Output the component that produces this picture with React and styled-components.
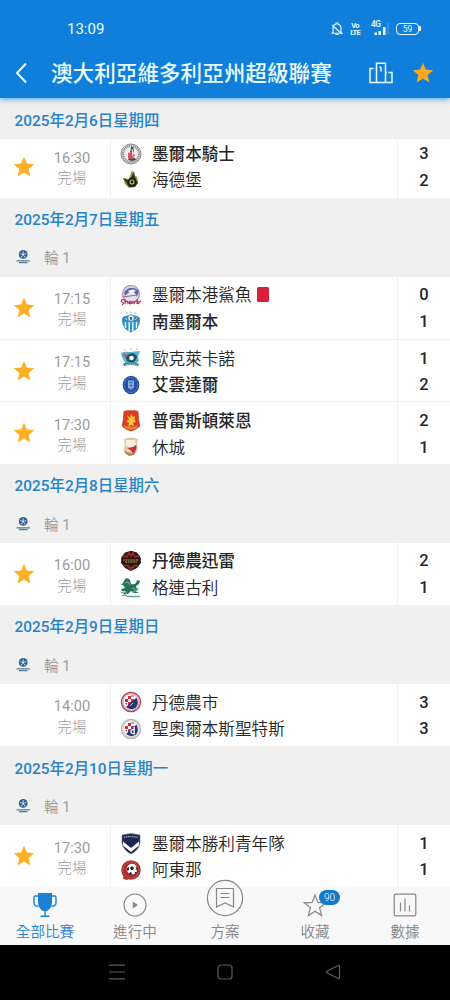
import styled, { createGlobalStyle } from "styled-components";

const STAR = "M12 .8 15.1 8.3 23.3 8.9 17 14.2 19 22.3 12 17.9 5 22.3 7 14.2.7 8.9 8.9 8.3Z";

const Knights = () => (
	<svg viewBox="0 0 22 22">
		<circle cx="11" cy="11" r="10" fill="#e4e4e4" stroke="#8a9090" />
		<circle cx="11" cy="11" r="8.1" fill="none" stroke="#858b8b" strokeWidth="2.2" strokeDasharray="1.2 .8" />
		<circle cx="11" cy="11" r="6.3" fill="#f2eeee" />
		<path d="M11 4h2l1 3-1 3h-3ZM9 15h6l1 2-4 1-4-1Z" fill="#4a4d50" />
		<path d="M8 10l4-1 3 3-2 4-5-1Z" fill="#d8535f" />
		<path d="M12 6l1 7" stroke="#fff" strokeWidth="1" />
	</svg>
);

const Heidelberg = () => (
	<svg viewBox="0 0 22 22">
		<path d="M12 1l2 5 3 2 1 5-3 5-6 1-4-4-2-6 6 1Z" fill="#8b9338" />
		<path d="M3 9l7 3 4-10 1 7 3 5-3 4-6 0-3-5Z" fill="#35391d" />
		<circle cx="12" cy="13" r="4.4" fill="#181b16" />
		<circle cx="12" cy="13" r="2" fill="none" stroke="#c4c96d" strokeWidth="1.1" />
	</svg>
);

const Sharks = () => (
	<svg viewBox="0 0 22 22">
		<circle cx="11" cy="10" r="8.5" fill="#dce1f2" stroke="#bd98b8" strokeWidth="1.4" />
		<path d="M4 8Q11 0 19 7L17 13Q15 6 8 9L5 12Z" fill="#5768a8" />
		<path d="M8 7q5-3 8 0l-3 1 2 3-5-2Z" fill="#fff" />
		<path d="M3 13 17 11" stroke="#c65070" />
		<path d="M4 16Q0 15 2 18q3 1 0 3M5 15v5m0-2q3-2 3 2m3-3q-3 1-1 3l2-2v2m2-3v3q0-3 2-2m1-3v5m0-2 2-1m-2 1 2 2m2-3q-2 0-1 2" fill="none" stroke="#b2294c" strokeWidth="1.15" />
	</svg>
);

const SouthMelbourne = () => (
	<svg viewBox="0 0 22 22">
		<path d="M2 9h18q0 9-9 12.5Q2 18 2 9Z" fill="#2894cf" />
		<path d="M5.5 11v6m3.7-6v9.5m3.6-9.5v9.5m3.7-9.5v6" stroke="#fff" strokeWidth="1.4" />
		<path d="M2 9q0-4 4-4 5-3 10 0 4 0 4 4l-2 2H4Z" fill="#3a88b4" />
		<circle cx="11" cy="7" r="3.2" fill="#edf5fa" stroke="#5390ad" strokeWidth=".7" />
		<path d="m11 5.7-1.4 1 .6 2h1.7l.6-2Z" fill="#315d76" />
		<path d="m5 7 2 2m8 0 2-2" stroke="#d9f1ff" strokeWidth=".7" />
		<circle cx="7" cy="2" r=".7" fill="#7fb3cf" /><circle cx="11" cy="1.2" r=".7" fill="#7fb3cf" /><circle cx="15" cy="2" r=".7" fill="#7fb3cf" />
	</svg>
);

const Oakleigh = () => (
	<svg viewBox="0 0 22 22">
		<path d="M1 6q4-2 9-1l10-1-2 6 1 4-4 3-8 1-3-4-2-4Z" fill="#58b4ca" />
		<path d="m5 8 8-2 4 3-1 4-4 3-5-2-1-3Z" fill="#22516b" />
		<circle cx="11.5" cy="11" r="2.3" fill="#e8ffff" />
		<path d="M3 7h6l-2 2.4H4Z" fill="#a86478" />
		<path d="M3.5 18q7-3 15 0" fill="none" stroke="#38839b" strokeWidth="2.8" />
		<path d="M5 18.2q6-2.4 12 0" fill="none" stroke="#fff" strokeWidth=".7" strokeDasharray="1.5 .7" />
		<path d="m4 2 1 1.5M11 .5V3m6-1.5L16 3" stroke="#8dbdcb" />
	</svg>
);

const Avondale = () => (
	<svg viewBox="0 0 22 22">
		<ellipse cx="11" cy="11" rx="8.3" ry="9.3" fill="#2450a2" />
		<ellipse cx="11" cy="11" rx="6.5" ry="7.4" fill="none" stroke="#5c87cc" strokeDasharray="1.5 1" />
		<path d="M8 6.5h6v7l-3 2.5-3-2.5Z" fill="#8eafe0" />
		<path d="M9 8.5h4m-4 3h4m-2-4v7" stroke="#3763ac" strokeWidth=".8" />
	</svg>
);

const Preston = () => (
	<svg viewBox="0 0 22 22">
		<path d="M4 1.5 7 .8h8l3 .7q0 7 1.8 14.5-2.3 3-8.8 5-6.5-2-8.8-5Q4 8.500 4 1.500Z" fill="#dd3c26" stroke="#b24120" strokeWidth=".8" />
		<path d="M4 15q7 4 14 0l-1 3-6 2-6-2Z" fill="#ed8424" />
		<path d="m7 5 3 3 1-4 2 3 2-1-.5 4 1.500 2-3 .5 1 3.500-3-1-3 2 1-4-3-2 3-1Z" fill="#ffc53d" />
	</svg>
);

const Hume = () => (
	<svg viewBox="0 0 22 22">
		<path d="M4 3q7-3 14 0l-1 5q2 7-2 9l-4 3-5-2-2-4 1-6Z" fill="#e2c6a3" />
		<path d="M6 4h9l1 6-5 2-5-2Z" fill="#f8eedb" />
		<path d="m8 12 5-1 3-2 .5 3-1.500 4-3 2Z" fill="#c5303a" />
		<path d="M4 14q5 5 12 2l-2 3-5 1-4-3Z" fill="#bb8450" />
		<path d="m7 15 3-1 2 3" stroke="#fff1dd" fill="none" />
	</svg>
);

const Thunder = () => (
	<svg viewBox="0 0 22 22">
		<path d="m11 .8 6 1.700 3.500 4.500.5 6-4 5-6 3-6-3-4-5 .5-6L5 2.500Z" fill="#331a18" />
		<path d="m3 6 4 1 2-4 2 3 2-3 2 4 4-1M4 16l3-1 4 5 4-5 3 1" fill="none" stroke="#a5272b" strokeWidth="1.4" />
		<path d="M1 8.500h20L18 14q-7 1-14 0Z" fill="#211716" />
		<path d="M3 10h16M5 12h12" stroke="#b5a34d" strokeWidth="1.2" strokeDasharray="2 .6" />
		<path d="m8 15.500 3 2.500 3-2.500" fill="none" stroke="#a42d2a" />
	</svg>
);

const GreenGully = () => (
	<svg viewBox="0 0 22 22">
		<path d="M5 2q3-2 5 1l1 4q3 1 5-1l1-3 3 1-1 3-3 2 1 3-2 2 4 2-5 0-3-2-3 3-5 0 3-3-4 0-1-2 4-1-2-3-2 0 2-2Z" fill="#27725d" />
		<path d="m12 14 7-3-1 2-5 3Z" fill="#5a9987" />
		<path d="M1 16q4-2 6 1m-5 2q3-2 5 0M7 19.500h13" fill="none" stroke="#6aa592" strokeWidth="1.300" />
		<path d="m5 6 3-1 2 3m2 3 3 1" stroke="#bce0d2" strokeWidth=".6" fill="none" />
	</svg>
);

// checkered badge shared by the two Croatian clubs
const Checkered = ({ ring, letter }) => (
	<svg viewBox="0 0 22 22">
		<circle cx="11" cy="11" r="9.6" fill="#f5eeee" stroke={ring} strokeWidth="1.3" />
		<circle cx="11" cy="11" r="8.2" fill="none" stroke={ring} strokeWidth="1" strokeDasharray="1 .8" />
		<circle cx="11" cy="11" r="6.9" fill="#fff" />
		<path d="M5 8h3v3H5Zm3-3h3v3H8Zm3 3h3v3h-3Zm-3 3h3v3H8ZM11 4.4h3v1h-3Zm-6 7.6h2v2Z" fill="#d32d3c" />
		<path d="M16.5 6.5 6 16q5 4 10 .5 3.5-4 .5-10Z" fill="#263a70" />
		<path d={letter ? "M14.2 9v7.5M14 12q-3-1-3 1.5t3 2" : "m10 15 3-3"} fill="none" stroke="#e9eef5" strokeWidth={letter ? 1.4 : 0.8} />
	</svg>
);

const Victory = () => (
	<svg viewBox="0 0 22 22">
		<path d="M2 2q9-3 18 0v8q-1 7-9 11-8-4-9-11Z" fill="#1c2750" stroke="#7a839e" strokeWidth=".7" />
		<path d="M3 8.500 11 15l8-6.500v4L11 19 3 12.500Z" fill="#fff" />
		<path d="M4 4.5q7-2 14 0" fill="none" stroke="#a8b1c9" strokeWidth="1.2" strokeDasharray="1.3 .6" />
	</svg>
);

const Altona = () => (
	<svg viewBox="0 0 22 22">
		<circle cx="11" cy="11" r="9.8" fill="#a92d31" />
		<circle cx="11" cy="11" r="8" fill="none" stroke="#df8a83" strokeWidth="1" strokeDasharray="1 1.1" />
		<circle cx="12" cy="10" r="5.3" fill="#fff" />
		<path d="m12 7 2 2-1 2h-2l-1-2Zm-5 2 2-1 0 3-2 1Zm9 0 1-2 1 4-1 1Zm-6 4 2 1-1 2-2-1Zm5 0 2 0-2 2Z" fill="#29242a" />
		<path d="M4 12q2 6 8 6l-5 3-4-1Z" fill="#b53738" />
	</svg>
);

const LeagueLogo = () => (
	<svg width="15" height="15" viewBox="0 0 15 15">
		<circle cx="7.2" cy="5.4" r="4.4" fill="#345f91" />
		<path d="M7.200 2.300v1.500M4.300 4.500l1.300.6M10.100 4.500l-1.300.6M5.300 8.200l.8-1.200M9.100 8.200l-.8-1.200" stroke="#cddbea" strokeWidth="1.1" />
		<circle cx="7.2" cy="5.5" r="1.2" fill="#e4ebf3" />
		<path d="M.5 11.800h13.500M3 13.600h8.500" fill="none" stroke="#5a7b9c" strokeWidth="1.2" />
	</svg>
);

const sections = [
	{
		date: "2025年2月6日星期四",
		matches: [
			{ time: "16:30", fav: true, home: ["墨爾本騎士", 3, <Knights />], away: ["海德堡", 2, <Heidelberg />], win: "home" },
		],
	},
	{
		date: "2025年2月7日星期五",
		round: "輪 1",
		matches: [
			{ time: "17:15", fav: true, home: ["墨爾本港鯊魚", 0, <Sharks />], away: ["南墨爾本", 1, <SouthMelbourne />], win: "away", red: true },
			{ time: "17:15", fav: true, home: ["歐克萊卡諾", 1, <Oakleigh />], away: ["艾雲達爾", 2, <Avondale />], win: "away" },
			{ time: "17:30", fav: true, home: ["普雷斯頓萊恩", 2, <Preston />], away: ["休城", 1, <Hume />], win: "home" },
		],
	},
	{
		date: "2025年2月8日星期六",
		round: "輪 1",
		matches: [
			{ time: "16:00", fav: true, home: ["丹德農迅雷", 2, <Thunder />], away: ["格連古利", 1, <GreenGully />], win: "home" },
		],
	},
	{
		date: "2025年2月9日星期日",
		round: "輪 1",
		matches: [
			{ time: "14:00", home: ["丹德農市", 3, <Checkered ring="#a8475b" />], away: ["聖奧爾本斯聖特斯", 3, <Checkered ring="#b3b6b9" letter />] },
		],
	},
	{
		date: "2025年2月10日星期一",
		round: "輪 1",
		matches: [
			{ time: "17:30", fav: true, home: ["墨爾本勝利青年隊", 1, <Victory />], away: ["阿東那", 1, <Altona />] },
		],
	},
];

const StatusBar = () => (
	<Status>
		<Clock>13:09</Clock>
		<StatusIcons>
			<svg width="12" height="14" viewBox="0 0 12 14" fill="none" stroke="currentColor" strokeWidth="1.1">
				<path d="M2 10.2V6q0-3 3-3.700V1h2v1.300q3 .7 3 3.700v4.200l1 1H1ZM4.500 12.500h3M1 3l10 9" />
			</svg>
			<Volte><span>Vo</span><span>LTE</span></Volte>
			<Signal>
				<span>4G</span>
				<svg width="17" height="14" viewBox="0 0 17 14" fill="currentColor">
					<path d="M2.500 10.500h2.500v2.500h-2.500Zm4-1.500h2.500v4h-2.500Zm4.500-4h2.500v8h-2.500Z" />
					<path d="M15.5 1h1v12h-1Z" opacity=".3" />
				</svg>
			</Signal>
			<Battery>59</Battery>
		</StatusIcons>
	</Status>
);

const Team = ({ team, bold, red }) => (
	<TeamRow>
		<Crest>{team[2]}</Crest>
		<TeamName $bold={bold}>{team[0]}</TeamName>
		{red && <RedCard />}
	</TeamRow>
);

const Match = ({ match }) => (
	<MatchRow>
		<Favourite>
			{match.fav && <svg width="22" height="22" viewBox="0 0 24 24"><path d={STAR} fill="#fdb022" /></svg>}
		</Favourite>
		<Kickoff>
			<Time>{match.time}</Time>
			<State>完場</State>
		</Kickoff>
		<Teams>
			<Team team={match.home} bold={match.win === "home"} red={match.red} />
			<Team team={match.away} bold={match.win === "away"} />
		</Teams>
		<Scores>
			<Score>{match.home[1]}</Score>
			<Score>{match.away[1]}</Score>
		</Scores>
	</MatchRow>
);

const App = () => {
	return (
		<Screen>
			<GlobalStyle />
			<Header>
				<StatusBar />
				<TitleBar>
					<BackIcon width="14" height="22" viewBox="0 0 14 22" fill="none" stroke="currentColor" strokeWidth="2">
						<path d="M12 1.5 3 11l9 9.5" />
					</BackIcon>
					<Title>澳大利亞維多利亞州超級聯賽</Title>
					<PodiumIcon width="24" height="22" viewBox="0 0 24 22" fill="none" stroke="currentColor" strokeWidth="1.5">
						<path d="M4.500 6.500H1V20.5H23V10.500H19.500M7.500 20V1.200H16.500V20M7.500 6.500H6.500M16.500 10.500H18M12 5V9.500M10.500 5.200h1.500" />
					</PodiumIcon>
					<svg width="22" height="22" viewBox="0 0 24 24"><path d={STAR} fill="#fda91c" /></svg>
				</TitleBar>
			</Header>
			<Feed>
				{sections.map((section) => (
					<Section key={section.date}>
						<DateHead $sticky={!section.round}>{section.date}</DateHead>
						{section.round && <Round><LeagueLogo />{section.round}</Round>}
						{section.matches.map((match) => <Match key={match.home[0]} match={match} />)}
					</Section>
				))}
			</Feed>
			<TabBar>
				<Tab $active>
					<TabIcon>
						<svg width="24" height="26" viewBox="0 0 24 26">
							<path d="M5 1h14v10q-1 6-5 8h-4Q6 17 5 11Z" fill="currentColor" />
							<path d="M5 4H2.500Q1 4 1 6v5q0 3 4.500 3.500M19 4h2.500q1.500 0 1.500 2v5q0 3-4.500 3.500M12 17v7M7.5 24.200h9" fill="none" stroke="currentColor" strokeWidth="1.4" />
						</svg>
					</TabIcon>
					全部比賽
				</Tab>
				<Tab>
					<TabIcon>
						<svg width="24" height="24" viewBox="0 0 24 24">
							<circle cx="12" cy="12" r="11" fill="none" stroke="currentColor" strokeWidth="1.1" />
							<path d="M9.800 8.500 15 12l-5.200 3.500Z" fill="currentColor" />
						</svg>
					</TabIcon>
					進行中
				</Tab>
				<Tab>
					<TabIcon $raised>
						<svg width="38" height="38" viewBox="0 0 38 38" fill="#f8f8f8" stroke="currentColor" strokeWidth="1.2">
							<circle cx="19" cy="19" r="17.6" />
							<path d="M10.500 9.500h17v18.500l-8.500-4-8.500 4ZM14.500 14.5h9M14.500 18.5h9" />
						</svg>
					</TabIcon>
					方案
				</Tab>
				<Tab>
					<TabIcon>
						<svg width="24" height="26" viewBox="0 0 24 26" fill="none" stroke="currentColor" strokeWidth="1.2">
							<path d="m12 3 2.8 7.4 8 .4-6.2 5 2 7.8-6.6-4.3-6.6 4.3 2-7.8-6.2-5 8-.4Z" />
						</svg>
						<Badge>90</Badge>
					</TabIcon>
					收藏
				</Tab>
				<Tab>
					<TabIcon>
						<svg width="24" height="24" viewBox="0 0 24 24" fill="none" stroke="currentColor" strokeWidth="1.2">
							<rect x="1.2" y="1.2" width="21.6" height="21.6" rx="1.5" />
							<path d="M7.500 9.500v9M12 5.500v13M16.500 12.500v6" />
						</svg>
					</TabIcon>
					數據
				</Tab>
			</TabBar>
			<SystemBar>
				<svg width="16" height="16" viewBox="0 0 16 16"><path d="M0 1.2h16M0 8h16M0 14.8h16" /></svg>
				<svg width="16" height="16" viewBox="0 0 16 16"><rect x="1" y="1" width="14" height="14" rx="3" /></svg>
				<svg width="16" height="16" viewBox="0 0 16 16"><path d="M13 1.5 2 7.2q-1 .8 0 1.6l11 5.7q1.5.6 1.5-1V2.5q0-1.6-1.5-1Z" /></svg>
			</SystemBar>
		</Screen>
	);
};

export default App;

const GlobalStyle = createGlobalStyle`
	* {
		box-sizing: border-box;
	}

	body {
		margin: 0;
		font-family: Roboto, "Noto Sans CJK TC", sans-serif;
	}

	svg {
		display: block;
		flex-shrink: 0;
	}
`;

const Screen = styled.div`
	display: flex;
	flex-direction: column;
	width: 450px;
	height: 1000px;
	overflow: hidden;
	background-color: #f0f0f0;
`;

const Header = styled.header`
	position: relative;
	z-index: 2;
	height: 98px;
	flex-shrink: 0;
	background-color: #107fdb;
	color: #e9fbff;
	box-shadow: 0 1px 6px rgba(16, 127, 219, 0.75);
`;

const Status = styled.div`
	display: flex;
	justify-content: space-between;
	align-items: center;
	height: 48px;
	padding: 10px 28px 0 67px;
`;

const Clock = styled.span`
	font-size: 15px;
	line-height: 20px;
`;

const StatusIcons = styled.div`
	display: flex;
	align-items: center;
`;

const Volte = styled.div`
	display: flex;
	flex-direction: column;
	align-items: center;
	width: 10px;
	margin-left: 7px;
	font-size: 7.5px;
	font-weight: 700;
	line-height: 7px;
	letter-spacing: -0.8px;
`;

const Signal = styled.div`
	position: relative;
	margin: 0 7px 0 12px;

	span {
		position: absolute;
		top: -2px;
		left: -1px;
		font-size: 8.5px;
		font-weight: 500;
		line-height: 9px;
		letter-spacing: -0.5px;
	}
`;

const Battery = styled.div`
	position: relative;
	width: 23px;
	height: 12px;
	margin-right: 3px;
	border: 1.5px solid currentColor;
	border-radius: 4px;
	font-size: 8.5px;
	line-height: 10px;
	text-align: center;

	&::after {
		content: "";
		position: absolute;
		top: 2px;
		right: -3px;
		width: 2px;
		height: 5px;
		background-color: currentColor;
		border-radius: 0 1px 1px 0;
	}
`;

const TitleBar = styled.div`
	display: flex;
	align-items: center;
	height: 50px;
	padding: 0 16px 0 14px;
`;

const BackIcon = styled.svg`
	margin-right: 23px;
`;

const PodiumIcon = styled.svg`
	margin-right: 19px;
`;

const Title = styled.h1`
	flex: 1;
	margin: 0;
	padding-top: 2px;
	font-size: 21.6px;
	font-weight: 500;
	line-height: 30px;
	white-space: nowrap;
`;

const Feed = styled.main`
	flex: 1;
	min-height: 0;
	overflow: hidden;
`;

const Section = styled.section`
	display: flex;
	flex-direction: column;
`;

// the first date is pinned and hides the top edge of the match scrolled under it
const DateHead = styled.div`
	position: relative;
	z-index: 1;
	display: flex;
	align-items: center;
	height: ${({ $sticky }) => ($sticky ? "41.4px" : "39.5px")};
	margin-bottom: ${({ $sticky }) => ($sticky ? "-4px" : "0")};
	padding: ${({ $sticky }) => ($sticky ? "1px" : "2px")} 14.5px 0;
	border-bottom: 1px solid #ececec;
	background-color: #f0f0f0;
	color: #2583cb;
	font-size: 15.4px;
	font-weight: 500;
`;

const Round = styled.div`
	display: flex;
	align-items: center;
	gap: 13.5px;
	height: 39.4px;
	padding: 0 15px 0 15.5px;
	color: #a0a0a0;
	font-size: 14.6px;
	font-weight: 400;
`;

const MatchRow = styled.article`
	display: flex;
	height: 62.4px;
	background-color: #fff;

	& + & {
		border-top: 1px solid #f1f1f1;
	}
`;

const Favourite = styled.div`
	display: flex;
	align-items: center;
	justify-content: center;
	width: 48px;
`;

const Kickoff = styled.div`
	display: flex;
	flex-direction: column;
	align-items: center;
	width: 63px;
	padding: 12.4px 14px 0 0;
	border-right: 1px solid #f1f1f1;
	color: #9b9b9b;
	line-height: 20px;
`;

const Time = styled.span`
	font-size: 14.6px;
`;

const State = styled.span`
	padding-top: 1.4px;
	font-size: 14.4px;
	font-weight: 300;
`;

const Teams = styled.div`
	flex: 1;
	padding-top: 5px;
	padding-left: 9px;
`;

const TeamRow = styled.div`
	display: flex;
	align-items: center;
	height: 26.6px;
`;

const Crest = styled.div`
	width: 22px;
	height: 22px;
	margin-right: 10px;
`;

const TeamName = styled.span`
	padding-top: 2.4px;
	color: #262626;
	font-size: 16.6px;
	font-weight: ${({ $bold }) => ($bold ? 500 : 350)};
	line-height: 24px;
`;

const RedCard = styled.i`
	width: 12px;
	height: 15px;
	margin-left: 5px;
	border-radius: 1.5px;
	background-color: #dc1f38;
`;

const Scores = styled.div`
	width: 53px;
	padding-top: 5.7px;
	border-left: 1px solid #f1f1f1;
`;

const Score = styled.div`
	color: #262626;
	font-size: 16.5px;
	font-weight: 500;
	line-height: 26.5px;
	text-align: center;
`;

const TabBar = styled.nav`
	position: relative;
	z-index: 2;
	display: flex;
	height: 58px;
	flex-shrink: 0;
	background-color: #f8f8f8;
`;

const Tab = styled.div`
	display: flex;
	flex: 1;
	flex-direction: column;
	align-items: center;
	color: ${({ $active }) => ($active ? "#1c82d6" : "#868686")};
	font-size: 14.6px;
	font-weight: 350;
	line-height: 20px;
`;

const TabIcon = styled.div`
	position: relative;
	display: flex;
	align-items: center;
	justify-content: center;
	height: 38px;
	margin-top: ${({ $raised }) => ($raised ? "-8px" : "-1px")};
	margin-bottom: ${({ $raised }) => ($raised ? "5px" : "-2px")};
`;

const Badge = styled.span`
	position: absolute;
	top: 4px;
	left: 16px;
	width: 21px;
	height: 15px;
	border-radius: 8px;
	background-color: #1279cb;
	color: #fff;
	font-size: 10px;
	line-height: 15px;
	text-align: center;
`;

const SystemBar = styled.footer`
	display: flex;
	align-items: center;
	justify-content: space-between;
	height: 55px;
	flex-shrink: 0;
	padding: 0 109px 1px;
	background-color: #000;

	svg {
		fill: none;
		stroke: #5c5c5c;
		stroke-width: 1.2;
	}
`;
